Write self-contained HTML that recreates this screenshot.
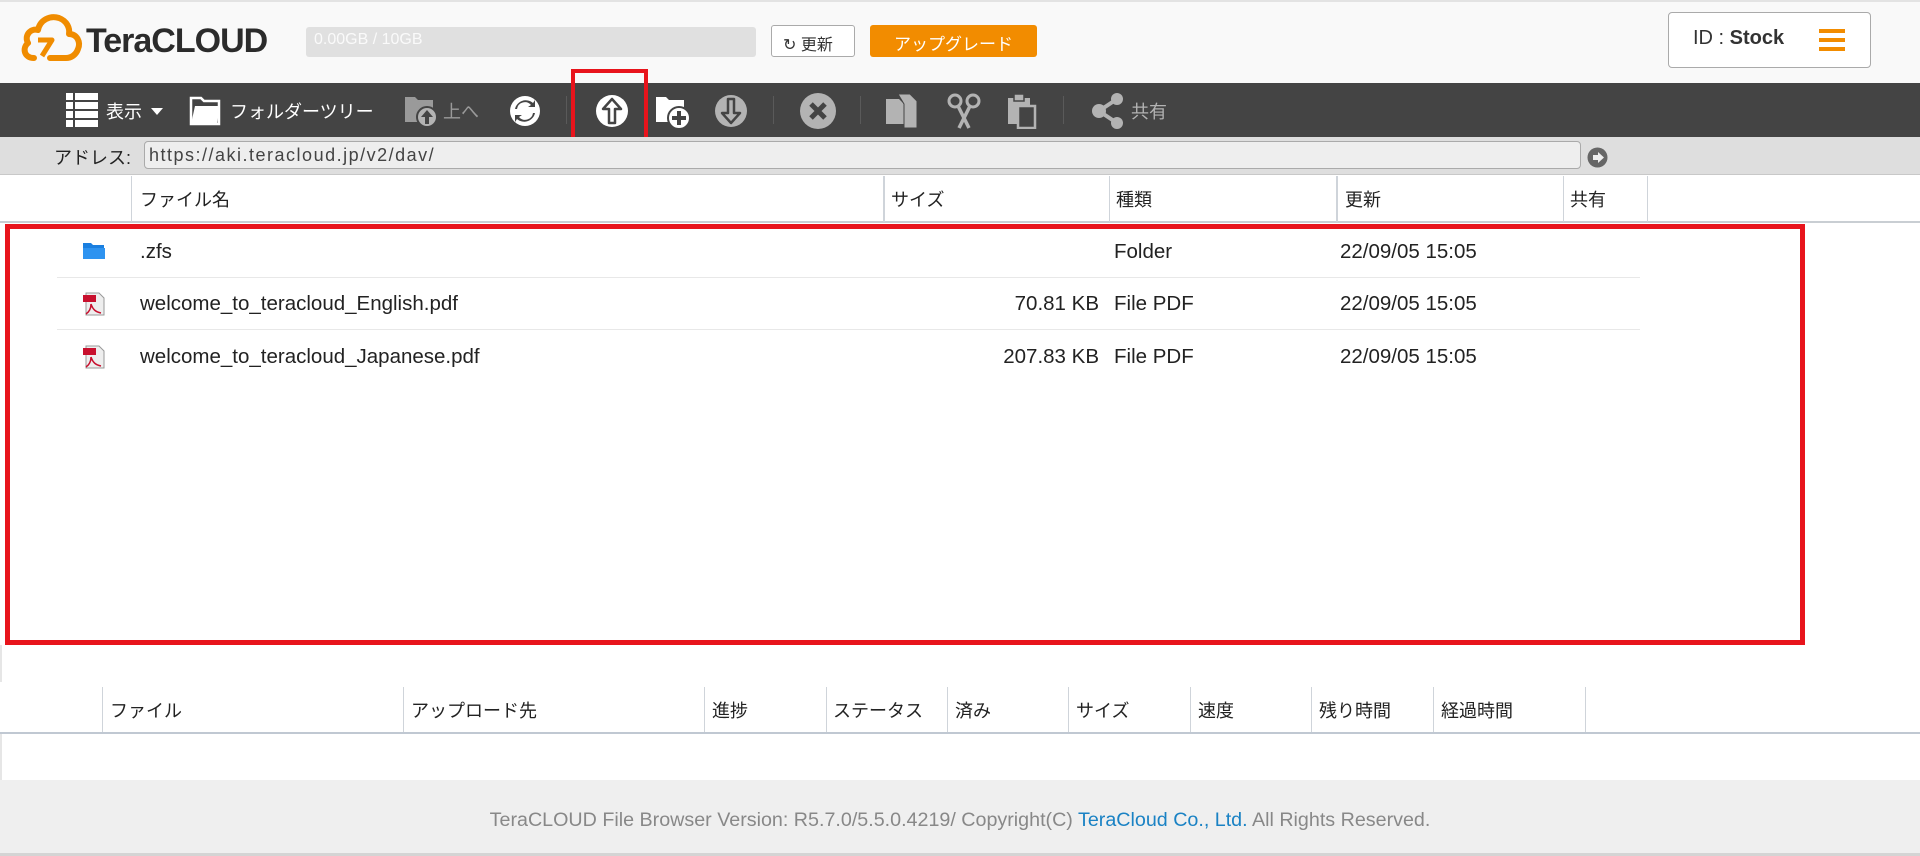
<!DOCTYPE html>
<html><head><meta charset="utf-8"><style>
*{box-sizing:border-box;margin:0;padding:0}
body{width:1920px;height:856px;overflow:hidden;background:#fff;font-family:"Liberation Sans","Noto Sans CJK JP",sans-serif;color:#222;position:relative}
.abs{position:absolute}
.hdr{left:0;top:0;width:1920px;height:83px;background:#f9f9f9;border-top:2px solid #e3e3e3}
.tb{left:0;top:83px;width:1920px;height:54px;background:#444}
.addr{left:0;top:137px;width:1920px;height:38px;background:#dedede;border-bottom:1px solid #c8c8c8}
.t{position:absolute;white-space:nowrap}
.sep{position:absolute;top:96px;width:1px;height:28px;background:#5a5a5a}
.vl{position:absolute;width:1px;background:#cfd4da}
.r{font-size:20.5px}
</style></head><body>
<div class="abs hdr"></div>
<svg class="abs" style="left:20px;top:12px" width="70" height="52" viewBox="0 0 70 52">
<path d="M14 46 C4 46 2 36 8 31 C4 24 10 16 18 18 C20 8 30 3 39 6 C47 9 50 16 49 22 C57 22 61 30 58 37 C56 43 51 46 46 46 L30 46" fill="none" stroke="#f08c00" stroke-width="6" stroke-linecap="round" stroke-linejoin="round"/>
<path d="M18 28 L32 28 L22 44" fill="none" stroke="#f08c00" stroke-width="5" stroke-linejoin="round"/>
</svg>
<div class="t" style="left:86px;top:22px;font-size:34px;font-weight:bold;color:#2b2b2b;letter-spacing:-1px">TeraCLOUD</div>
<div class="abs" style="left:306px;top:27px;width:450px;height:30px;background:#e0e0e0;border-radius:3px"></div>
<div class="t" style="left:314px;top:31px;font-size:16px;color:#fafafa">0.00GB / 10GB</div>
<div class="abs" style="left:771px;top:25px;width:84px;height:32px;background:#fff;border:1px solid #aaa;border-radius:3px"></div>
<div class="t" style="left:783px;top:31px;font-size:16px;color:#333">&#x21bb; 更新</div>
<div class="abs" style="left:870px;top:25px;width:167px;height:32px;background:#f28c00;border-radius:3px"></div>
<div class="t" style="left:870px;top:30px;width:167px;text-align:center;font-size:17px;color:#fff">アップグレード</div>
<div class="abs" style="left:1668px;top:12px;width:203px;height:56px;background:#fff;border:1px solid #aaa;border-radius:4px"></div>
<div class="t" style="left:1693px;top:27px;font-size:20px;color:#333">ID : <b>Stock</b></div>
<div class="abs" style="left:1819px;top:29px;width:26px;height:4px;background:#f28c00;box-shadow:0 9px 0 #f28c00,0 18px 0 #f28c00"></div>

<div class="abs tb"></div>
<svg class="abs" style="left:66px;top:93px" width="32" height="34"><g fill="#fff"><rect x="0" y="0" width="7" height="7"/><rect x="9" y="0" width="23" height="7"/><rect x="0" y="9" width="7" height="7"/><rect x="9" y="9" width="23" height="7"/><rect x="0" y="18" width="7" height="7"/><rect x="9" y="18" width="23" height="7"/><rect x="0" y="27" width="7" height="7"/><rect x="9" y="27" width="23" height="7"/></g></svg>
<div class="t" style="left:106px;top:98px;font-size:18px;color:#fff">表示</div>
<svg class="abs" style="left:151px;top:108px" width="12" height="7"><path d="M0 0H12L6 7Z" fill="#fff"/></svg>
<svg class="abs" style="left:189px;top:94px" width="32" height="32"><path d="M2 4h10l3 3h15v23H2Z" fill="none" stroke="#fff" stroke-width="2.5"/><path d="M6 12h25l-3 18H2Z" fill="#fff"/></svg>
<div class="t" style="left:230px;top:98px;font-size:18px;color:#fff">フォルダーツリー</div>
<svg class="abs" style="left:404px;top:94px" width="34" height="34"><path d="M1 3h10l3 3h15v22H1Z" fill="#9a9a9a"/><circle cx="23" cy="23" r="10" fill="#b3b3b3" stroke="#444" stroke-width="2"/><path d="M23 16l-6 7h4v7h4v-7h4Z" fill="#444"/></svg>
<div class="t" style="left:443px;top:98px;font-size:18px;color:#9a9a9a">上へ</div>
<svg class="abs" style="left:510px;top:96px" width="30" height="30"><circle cx="15" cy="15" r="15" fill="#fff"/><path d="M7 13a8 8 0 0 1 14-4l-3 2h7V4l-2 3A11 11 0 0 0 5 13Z M23 17a8 8 0 0 1-14 4l3-2H5v7l2-3a11 11 0 0 0 18-6Z" fill="#444"/></svg>
<div class="sep" style="left:566px"></div>
<svg class="abs" style="left:596px;top:95px" width="32" height="32"><circle cx="16" cy="16" r="16" fill="#fff"/><path d="M16 4L7 14h6v14h6V14h6Z" fill="none" stroke="#444" stroke-width="2.5" stroke-linejoin="round"/></svg>
<svg class="abs" style="left:655px;top:94px" width="36" height="36"><path d="M1 3h10l3 3h15v22H1Z" fill="#fff"/><circle cx="24" cy="24" r="11" fill="#fff" stroke="#444" stroke-width="2"/><path d="M24 17v14M17 24h14" stroke="#444" stroke-width="4"/></svg>
<svg class="abs" style="left:715px;top:95px" width="32" height="32"><circle cx="16" cy="16" r="16" fill="#b3b3b3"/><path d="M16 28L7 18h6V4h6v14h6Z" fill="none" stroke="#444" stroke-width="2.5" stroke-linejoin="round"/></svg>
<div class="sep" style="left:773px"></div>
<svg class="abs" style="left:800px;top:93px" width="36" height="36"><circle cx="18" cy="18" r="18" fill="#b3b3b3"/><path d="M11 11L25 25M25 11L11 25" stroke="#444" stroke-width="5"/></svg>
<div class="sep" style="left:860px"></div>
<svg class="abs" style="left:885px;top:93px" width="34" height="36"><path d="M1 6h13l5 5v20H1Z" fill="#b3b3b3"/><path d="M13 1h12l7 7v27H19V11Z" fill="#b3b3b3" stroke="#444" stroke-width="1"/></svg>
<svg class="abs" style="left:947px;top:93px" width="34" height="36"><circle cx="8" cy="8" r="6" fill="none" stroke="#b3b3b3" stroke-width="3"/><circle cx="26" cy="8" r="6" fill="none" stroke="#b3b3b3" stroke-width="3"/><path d="M11 13L22 35M23 13L12 35" stroke="#b3b3b3" stroke-width="3.5"/></svg>
<svg class="abs" style="left:1007px;top:93px" width="30" height="36"><path d="M1 5h22v26H1Z" fill="#b3b3b3"/><rect x="7" y="1" width="10" height="7" fill="#b3b3b3" stroke="#444" stroke-width="1.5"/><rect x="11" y="13" width="17" height="22" fill="#444" stroke="#b3b3b3" stroke-width="2.5"/></svg>
<div class="sep" style="left:1063px"></div>
<svg class="abs" style="left:1091px;top:93px" width="34" height="36"><path d="M26 6L8 18L26 30" stroke="#b3b3b3" stroke-width="4" fill="none"/><circle cx="26" cy="6" r="6" fill="#b3b3b3"/><circle cx="8" cy="18" r="7" fill="#b3b3b3"/><circle cx="26" cy="30" r="6" fill="#b3b3b3"/></svg>
<div class="t" style="left:1131px;top:98px;font-size:18px;color:#b3b3b3">共有</div>
<div class="abs" style="left:571px;top:69px;width:77px;height:75px;border:4px solid #e8141c"></div>

<div class="abs addr"></div>
<div class="t" style="left:54px;top:144px;font-size:18px;color:#222">アドレス:</div>
<div class="abs" style="left:144px;top:141px;width:1437px;height:28px;background:#eee;border:1px solid #aaa;border-radius:4px"></div>
<div class="t" style="left:149px;top:145px;font-size:18px;letter-spacing:1.5px;color:#444">https://aki.teracloud.jp/v2/dav/</div>
<svg class="abs" style="left:1587px;top:147px" width="21" height="21"><circle cx="10.5" cy="10.5" r="10" fill="#666"/><path d="M6 8h5V5l6 5.5-6 5.5v-3H6Z" fill="#eee"/></svg>

<div class="abs" style="left:0;top:175px;width:1920px;height:48px;border-bottom:2px solid #c9ced3;background:#fff"></div>
<div class="vl" style="left:131px;top:176px;height:46px"></div>
<div class="vl" style="left:883px;top:176px;height:46px;width:2px"></div>
<div class="vl" style="left:1109px;top:176px;height:46px"></div>
<div class="vl" style="left:1336px;top:176px;height:46px;width:2px"></div>
<div class="vl" style="left:1563px;top:176px;height:46px"></div>
<div class="vl" style="left:1647px;top:176px;height:46px"></div>
<div class="t" style="left:140px;top:186px;font-size:18px">ファイル名</div>
<div class="t" style="left:891px;top:186px;font-size:18px">サイズ</div>
<div class="t" style="left:1116px;top:186px;font-size:18px">種類</div>
<div class="t" style="left:1345px;top:186px;font-size:18px">更新</div>
<div class="t" style="left:1570px;top:186px;font-size:18px">共有</div>

<div class="abs" style="left:57px;top:277px;width:1583px;height:1px;background:#e8e8e8"></div>
<div class="abs" style="left:57px;top:329px;width:1583px;height:1px;background:#e8e8e8"></div>
<svg class="abs" style="left:82px;top:241px" width="24" height="19"><path d="M1 2h8l2 2h11v4H1Z" fill="#1a7fe0"/><path d="M1 7h22v11H1Z" fill="#2e93f0"/></svg>
<div class="t r" style="left:140px;top:240px">.zfs</div>
<div class="t r" style="left:1114px;top:240px">Folder</div>
<div class="t r" style="left:1340px;top:240px">22/09/05 15:05</div>
<svg class="abs" style="left:82px;top:292px" width="24" height="24"><path d="M4 1h13l5 5v17H4Z" fill="#eee" stroke="#999"/><rect x="1" y="3" width="13" height="7" fill="#c8102e"/><path d="M9 12c2 6 5 8 10 9M9 12c0 5-2 8-5 10" stroke="#c8102e" stroke-width="1.5" fill="none"/></svg>
<div class="t r" style="left:140px;top:292px">welcome_to_teracloud_English.pdf</div>
<div class="t r" style="left:880px;top:292px;width:219px;text-align:right">70.81 KB</div>
<div class="t r" style="left:1114px;top:292px">File PDF</div>
<div class="t r" style="left:1340px;top:292px">22/09/05 15:05</div>
<svg class="abs" style="left:82px;top:345px" width="24" height="24"><path d="M4 1h13l5 5v17H4Z" fill="#eee" stroke="#999"/><rect x="1" y="3" width="13" height="7" fill="#c8102e"/><path d="M9 12c2 6 5 8 10 9M9 12c0 5-2 8-5 10" stroke="#c8102e" stroke-width="1.5" fill="none"/></svg>
<div class="t r" style="left:140px;top:345px">welcome_to_teracloud_Japanese.pdf</div>
<div class="t r" style="left:880px;top:345px;width:219px;text-align:right">207.83 KB</div>
<div class="t r" style="left:1114px;top:345px">File PDF</div>
<div class="t r" style="left:1340px;top:345px">22/09/05 15:05</div>

<div class="abs" style="left:5px;top:224px;width:1800px;height:421px;border:5px solid #e8141c"></div>
<div class="abs" style="left:0;top:645px;width:2px;height:37px;background:#e6e6e6"></div>

<div class="abs" style="left:0;top:686px;width:1920px;height:48px;border-bottom:2px solid #c0c8d2"></div>
<div class="vl" style="left:102px;top:687px;height:45px"></div>
<div class="vl" style="left:403px;top:687px;height:45px"></div>
<div class="vl" style="left:704px;top:687px;height:45px"></div>
<div class="vl" style="left:826px;top:687px;height:45px"></div>
<div class="vl" style="left:947px;top:687px;height:45px"></div>
<div class="vl" style="left:1068px;top:687px;height:45px"></div>
<div class="vl" style="left:1190px;top:687px;height:45px"></div>
<div class="vl" style="left:1311px;top:687px;height:45px"></div>
<div class="vl" style="left:1433px;top:687px;height:45px"></div>
<div class="vl" style="left:1585px;top:687px;height:45px"></div>
<div class="t" style="left:110px;top:697px;font-size:18px">ファイル</div>
<div class="t" style="left:411px;top:697px;font-size:18px">アップロード先</div>
<div class="t" style="left:712px;top:697px;font-size:18px">進捗</div>
<div class="t" style="left:833px;top:697px;font-size:18px">ステータス</div>
<div class="t" style="left:955px;top:697px;font-size:18px">済み</div>
<div class="t" style="left:1076px;top:697px;font-size:18px">サイズ</div>
<div class="t" style="left:1198px;top:697px;font-size:18px">速度</div>
<div class="t" style="left:1319px;top:697px;font-size:18px">残り時間</div>
<div class="t" style="left:1441px;top:697px;font-size:18px">経過時間</div>
<div class="abs" style="left:0;top:734px;width:2px;height:46px;background:#e6e6e6"></div>

<div class="abs" style="left:0;top:780px;width:1920px;height:73px;background:#efefef"></div>
<div class="abs" style="left:0;top:853px;width:1920px;height:3px;background:#d4d4d4"></div>
<div class="t" style="left:0;top:809px;width:1920px;text-align:center;font-size:19.7px;color:#888">TeraCLOUD File Browser Version: R5.7.0/5.5.0.4219/ Copyright(C) <span style="color:#1a82c4">TeraCloud Co., Ltd.</span> All Rights Reserved.</div>
</body></html>
